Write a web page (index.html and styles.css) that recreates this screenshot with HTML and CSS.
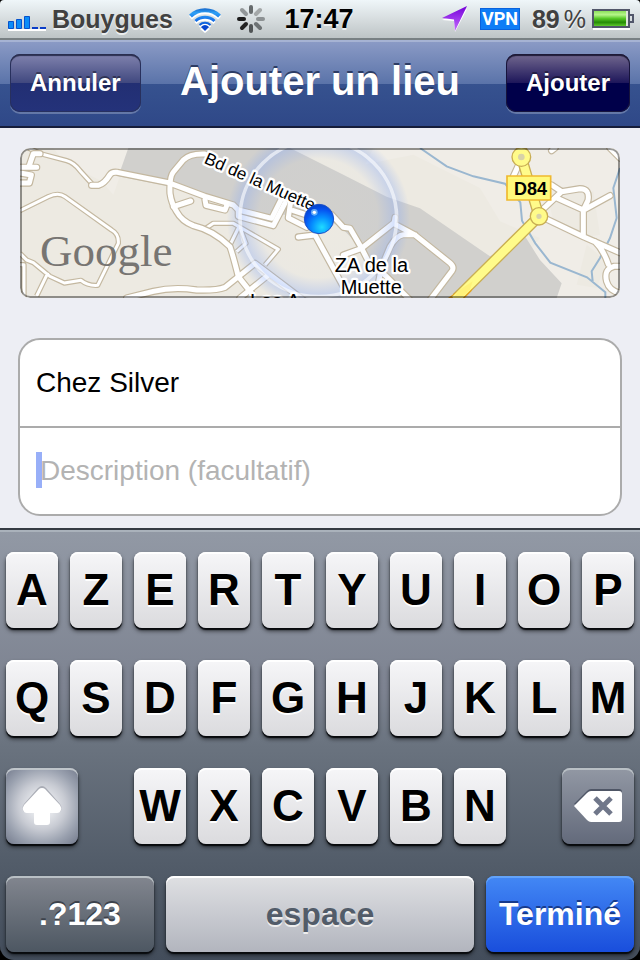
FILE: index.html
```html
<!DOCTYPE html>
<html lang="fr">
<head>
    <meta charset="UTF-8">
    <meta name="viewport" content="width=device-width, initial-scale=1.0">
    <title>Ajouter un lieu</title>
    <link rel="stylesheet" href="styles.css">
</head>
<body>
    <div class="screen">
        <div class="status-bar">
            <div class="status-left">
                <svg class="signal" width="38" height="15" viewBox="0 0 38 15">
                    <path d="M0 14h38" stroke="#fff" stroke-width="2"/>
                    <g fill="#0b8df8" stroke="#0652cc">
                        <path d="M.5 5.5h5v7h-5zM8.500 3.500h5v9h-5zM16.500 .5h5v12h-5z"/>
                    </g>
                    <path d="M24 12h6M32 12h6" stroke="#0b3ec8" stroke-width="2"/>
                </svg>
                <span class="carrier">Bouygues</span>
                <svg class="wifi" width="32" height="25" viewBox="0 0 32 25">
                    <defs>
                        <linearGradient id="wifiFill" x1="0" y1="0" x2="0" y2="24" gradientUnits="userSpaceOnUse">
                            <stop offset="0" stop-color="#1263c8"/>
                            <stop offset=".2" stop-color="#2fa0f5"/>
                            <stop offset=".5" stop-color="#1673ea"/>
                            <stop offset="1" stop-color="#003cc0"/>
                        </linearGradient>
                        <g id="waves">
                            <path d="M1.500 8a21 21 0 0 1 29 0" stroke-width="4"/>
                            <path d="M6.500 13a14 14 0 0 1 19 0" stroke-width="3"/>
                            <path d="M10.500 17a8 8 0 0 1 11 0" stroke-width="2"/>
                        </g>
                    </defs>
                    <use href="#waves" y="2" fill="none" stroke="#fff"/>
                    <path d="M11 21q5-4 10 0l-5 4z" fill="#fff"/>
                    <use href="#waves" fill="none" stroke="url(#wifiFill)"/>
                    <path d="M12 19q4-4 8 0l-4 4z" fill="#0646d0"/>
                </svg>
                <svg class="spinner" width="28" height="28" viewBox="-14 -14 28 28">
                    <g stroke-width="4" stroke-linecap="round">
                        <path d="M0-7v-5" stroke="#666b6d"/>
                        <path d="M5-5l4-4" stroke="#a4a8a9"/>
                        <path d="M7 0h5" stroke="#8c9193"/>
                        <path d="M5 5l4 4" stroke="#6d7274"/>
                        <path d="M0 7v5" stroke="#505456"/>
                        <path d="M-5 5l-4 4" stroke="#222"/>
                        <path d="M-7 0h-5" stroke="#1c1c1c"/>
                        <path d="M-5-5l-4-4" stroke="#929799"/>
                    </g>
                </svg>
            </div>
            <div class="clock">17:47</div>
            <div class="status-right">
                <svg class="location" width="26" height="26" viewBox="0 0 26 26">
                    <defs>
                        <linearGradient id="arrowFill" x1="0" y1="0" x2="0" y2="1">
                            <stop offset="0" stop-color="#7400d8"/>
                            <stop offset="1" stop-color="#c56cff"/>
                        </linearGradient>
                    </defs>
                    <path d="M25 3L0 14l12 1 1 11z" fill="#fff"/>
                    <path d="M25 0L0 12l12 1.500L13 25z" fill="url(#arrowFill)"/>
                </svg>
                <span class="vpn">VPN</span>
                <span class="percent">89<span class="sign">%</span></span>
                <svg class="battery" width="42" height="21" viewBox="0 0 42 21">
                    <defs>
                        <linearGradient id="batteryFill" x1="0" y1="0" x2="0" y2="1">
                            <stop offset="0" stop-color="#8be05a"/>
                            <stop offset=".25" stop-color="#b5f58a"/>
                            <stop offset=".5" stop-color="#57c827"/>
                            <stop offset=".75" stop-color="#258a05"/>
                            <stop offset="1" stop-color="#5fc92c"/>
                        </linearGradient>
                    </defs>
                    <path d="M1 20h37" stroke="#fff" stroke-width="2"/>
                    <path d="M1 1h36v17H1z" fill="#dfe6dc" stroke="#51566a" stroke-width="2"/>
                    <path d="M38 6h3v7h-3" fill="none" stroke="#51566a" stroke-width="2"/>
                    <path d="M2 2h32v15H2z" fill="url(#batteryFill)"/>
                </svg>
            </div>
        </div>

        <header class="nav-bar">
            <button class="nav-btn" type="button">Annuler</button>
            <h1>Ajouter un lieu</h1>
            <button class="nav-btn primary" type="button">Ajouter</button>
        </header>

        <main class="content">
            <div class="map">
                <!-- 3 unités = 1 pixel -->
                <svg viewBox="0 0 1800 450" preserveAspectRatio="xMidYMid slice" role="img" aria-label="Carte">
                    <defs>
                        <radialGradient id="dotFill" cx=".6" cy=".78" r=".75">
                            <stop offset="0" stop-color="#1fdcff"/>
                            <stop offset=".45" stop-color="#0690ff"/>
                            <stop offset=".8" stop-color="#0653f0"/>
                            <stop offset="1" stop-color="#0345d2"/>
                        </radialGradient>
                        <radialGradient id="halo">
                            <stop offset="0" stop-color="#86a8f5" stop-opacity="0"/>
                            <stop offset=".65" stop-color="#86a8f5" stop-opacity=".02"/>
                            <stop offset=".85" stop-color="#86a8f5" stop-opacity=".38"/>
                            <stop offset="1" stop-color="#86a8f5" stop-opacity="0"/>
                        </radialGradient>
                        <g id="roads" fill="none" stroke-linecap="round" stroke-linejoin="round">
                            <path d="M215 112h20q18-4 35-32 6-9 22-7l153 31 110 41 85 26 15 15 100 25 30-60"/>
                            <path d="M655 188v17l105 28 35-68M555 155l3 17 57 14 7-18M460 176l52-17"/>
                            <path d="M555 18q-45-2-65 18l-30 36q-12 14-10 64 4 30 20 55 15 28 50 42 60 14 110 63 10 30 25 90l40 50"/>
                            <path d="M0 58h50M0 105h28l6-24-34-6M28 52l12-35h20"/>
                            <path d="M812 160l-7 50 55 28M820 188l50 16M835 267l50-6 85 155"/>
                            <path d="M935 200l35 38 20 3 35 60 20 39 55 46 70 70"/>
                            <path d="M970 321l55-20 95-75 65 35 105 84q14 12 6 24l-66 87M1125 208l-3 20M1185 260h-35q-20 2-40 36l-25 60-10 50"/>
                            <path d="M320 450l80-20q60-14 130-4 60 2 85-8l90-72 145 110M660 450l85-69"/>
                        </g>
                        <g id="eastRoads" fill="none" stroke-linecap="round" stroke-linejoin="round">
                            <path d="M1560 204l130 62 110 48M1562 190l63-59-30-20M1480 85l24-52M1625 131l55-9q30 0 24 35l-14 29-80-36M1690 187l80-44M1690 187v76M1725 281q25 24 40 68M1800 355h-18q-32 8-22 46 8 28 40 34M1770 0l30 30M1595 8l10-8"/>
                        </g>
                        <g id="lanes" fill="none" stroke-linejoin="round">
                            <path d="M25 0l40 18 75 20q22 6 40 30l40 44M0 188l85-42q30-14 50 0l140 100q22 12 20 40l-62 126q-30 2-50-15l-50 8-43-20-50-41-20-8-20-20M84 374l-34 70M0 350h12v100"/>
                            <path d="M550 246l30-20h60l135 78-40 47M655 240l-25 51M662 244l16 42-28 25"/>
                        </g>
                    </defs>
                    <path d="M0 0h1800v450H0z" fill="#edeae2"/>
                    <path d="M100 0h230l-50 140-35-40L130 40zM1060 0h740v450h-250l-150-220-180-70-200-80z" fill="#f0ede7"/>
                    <path d="M980 60l200-40 200 100 60 100 120 50-100 130-80-60-200-160zM1580 130l140 0 20 130-60 10-80-50zM1700 290l60 50-30 80-60-10z" fill="#edeae2"/>
                    <path d="M325 0h485l160 80 130 66 100 35 210 144 105-60 45 71 65 70-15 44h-510l-55-110-20-39-65-66-80-35h-95l-30 15-115-34-185-65-160-31z" fill="#d1d0cd"/>
                    <path d="M1200 0l80 55 80 30 95 22 46 56 5 55 40 68 45 58 110 44 55 45v20M1800 60l-20 60 10 90-20 60-30 60-25 40 3 30" fill="none" stroke="#9ab7d0" stroke-width="6"/>
                    <use href="#lanes" stroke="#c4b8a0" stroke-width="16"/>
                    <use href="#lanes" stroke="#fff" stroke-width="9"/>
                    <use href="#roads" stroke="#c4b8a0" stroke-width="22"/>
                    <use href="#eastRoads" stroke="#c4b8a0" stroke-width="22"/>
                    <use href="#roads" stroke="#fff" stroke-width="15"/>
                    <use href="#eastRoads" stroke="#fff" stroke-width="15"/>
                    <g fill="none">
                        <path d="M1505 0v30l52 175L1310 450" stroke="#c9ae54" stroke-width="33"/>
                        <path d="M1362 408l-8 22-20 20h-50l25-18 25-4z" fill="#e3a020"/>
                        <path d="M1505 0v30l52 175L1305 455" stroke="#fffb8a" stroke-width="25"/>
                        <path d="M1358 400l-8 24-26 26h-24l18-24z" fill="#fff27a"/>
                    </g>
                    <g fill="#d8d2a8" stroke="#c9ae54" stroke-width="24">
                        <circle cx="1504" cy="27" r="18"/>
                        <circle cx="1557" cy="205" r="16"/>
                        <circle cx="1504" cy="27" r="18" stroke="#fffb8a" stroke-width="16"/>
                        <circle cx="1557" cy="205" r="16" stroke="#fffb8a" stroke-width="16"/>
                    </g>
                    <circle cx="895" cy="211" r="275" fill="url(#halo)"/>
                    <circle cx="895" cy="211" r="235" fill="none" stroke="#fff" stroke-opacity=".6" stroke-width="11"/>
                    <g class="map-label">
                        <text x="944" y="372">ZA de la</text>
                        <text x="962" y="438">Muette</text>
                        <text x="690" y="480">Les A</text>
                        <text class="street" transform="translate(550 44) rotate(24)">Bd de la Muette</text>
                    </g>
                    <path d="M1461 84h131v72h-131z" fill="#fff97c" stroke="#efb92f" stroke-width="5"/>
                    <text class="road-number" x="1482" y="140">D84</text>
                    <circle cx="897" cy="213" r="44" fill="url(#dotFill)" stroke="#1c50c8" stroke-width="3"/>
                    <circle cx="883" cy="193" r="10" fill="#9fe0ff" opacity=".6"/>
                    <circle cx="883" cy="193" r="5" fill="#fff"/>
                    <text class="map-logo" x="60" y="353">Google</text>
                </svg>
            </div>

            <form class="fields">
                <div class="field">
                    <input type="text" aria-label="Nom" value="Chez Silver">
                </div>
                <div class="field active">
                    <input type="text" aria-label="Description" placeholder="Description (facultatif)">
                </div>
            </form>
        </main>

        <div class="keyboard">
            <div class="key-row">
                <button class="key">A</button>
                <button class="key">Z</button>
                <button class="key">E</button>
                <button class="key">R</button>
                <button class="key">T</button>
                <button class="key">Y</button>
                <button class="key">U</button>
                <button class="key">I</button>
                <button class="key">O</button>
                <button class="key">P</button>
            </div>
            <div class="key-row">
                <button class="key">Q</button>
                <button class="key">S</button>
                <button class="key">D</button>
                <button class="key">F</button>
                <button class="key">G</button>
                <button class="key">H</button>
                <button class="key">J</button>
                <button class="key">K</button>
                <button class="key">L</button>
                <button class="key">M</button>
            </div>
            <div class="key-row with-shift">
                <button class="key shift" aria-label="Majuscule">
                    <svg width="40" height="40" viewBox="0 0 40 40">
                        <path d="M20 0q2 0 4 2l14 16q3 4 0 8H2q-3-4 0-8L16 2q2-2 4-2z" fill="#a9acb5"/>
                        <path d="M20 2q2 0 3 1l15 16q2 3 1 5-1 3-4 3h-7v9q0 3-3 3H15q-3 0-3-3v-9H5q-3 0-4-3-1-2 1-5L17 3q1-1 3-1z" fill="#fff"/>
                    </svg>
                </button>
                <div class="key-row">
                    <button class="key">W</button>
                    <button class="key">X</button>
                    <button class="key">C</button>
                    <button class="key">V</button>
                    <button class="key">B</button>
                    <button class="key">N</button>
                </div>
                <button class="key dark" aria-label="Effacer">
                    <svg width="48" height="34" viewBox="0 0 48 34">
                        <path d="M0 15L13 2q2-2 4-2h28q3 0 3 3v25" fill="#4f5666"/>
                        <path d="M0 17L13 4q2-2 4-2h28q3 0 3 3v25q0 3-3 3H17q-2 0-4-2z" fill="#fff"/>
                        <path d="M21 9l16 16M37 9L21 25" stroke="#70778a" stroke-width="5"/>
                    </svg>
                </button>
            </div>
            <div class="key-row bottom">
                <button class="key dark numbers">.?123</button>
                <button class="key space">espace</button>
                <button class="key done">Terminé</button>
            </div>
        </div>
    </div>
</body>
</html>
```

FILE: styles.css
```css
* {
    margin: 0;
    padding: 0;
    box-sizing: border-box;
}

body {
    font-family: "Liberation Sans", Arial, sans-serif;
    background: #000;
}

button,
input {
    font-family: inherit;
    border: none;
}

svg {
    display: block;
    flex: none;
}

.screen {
    min-height: 100vh;
    display: flex;
    flex-direction: column;
}

/* barre d'état */
.status-bar {
    display: grid;
    grid-template-columns: 1fr auto 1fr;
    align-items: center;
    height: 40px;
    padding: 0 6px 0 8px;
    background: linear-gradient(#eff6f9, #d7dddf 50%, #bdc4c6);
    border-bottom: 2px solid #788083;
    border-radius: 4px 4px 0 0;
    color: #414141;
    font-size: 25px;
    font-weight: bold;
    text-shadow: 0 2px 0 rgba(255, 255, 255, 0.7);
}

.status-left,
.status-right {
    display: flex;
    align-items: center;
}

.status-right {
    justify-content: flex-end;
}

.signal {
    margin: 8px 6px 0 0;
}

.wifi {
    margin: 2px 16px 0;
}

.clock {
    margin-right: 4px;
    color: #000;
    font-size: 27px;
}

.location {
    margin-right: 12px;
}

.vpn {
    width: 40px;
    height: 22px;
    margin-right: 12px;
    background: #0f7df6;
    border: 1px solid #0a62dc;
    color: #fff;
    font-family: Roboto, "Liberation Sans", sans-serif;
    font-size: 18px;
    line-height: 20px;
    text-align: center;
    text-shadow: none;
}

.percent {
    display: flex;
    gap: 4px;
    margin-right: 6px;
}

.percent .sign {
    font-weight: normal;
}

/* barre de navigation */
.nav-bar {
    display: grid;
    grid-template-columns: 1fr auto 1fr;
    align-items: center;
    height: 88px;
    padding: 0 10px 2px;
    background: linear-gradient(#8a9ac5, #5a73a9 50%, #36528f 50%, #2f4888);
    border-top: 2px solid #a6b3d3;
    border-bottom: 2px solid #161d3a;
}

.nav-bar h1 {
    padding-bottom: 4px;
    color: #fff;
    font-size: 40px;
    line-height: 48px;
    text-shadow: 0 -2px 0 #2c3c64;
}

.nav-btn {
    justify-self: start;
    height: 58px;
    padding: 0 20px;
    border-radius: 10px;
    background: linear-gradient(#8183ae, #40487f 50%, #222f73 50%, #24327a);
    box-shadow: inset 0 2px 1px #2b2f50, inset 0 0 0 1px #28315f, 0 2px 0 rgba(255, 255, 255, 0.25);
    color: #fff;
    font-size: 24px;
    font-weight: bold;
    text-shadow: 0 -2px 0 rgba(0, 0, 0, 0.4);
}

.nav-btn.primary {
    justify-self: end;
    background: linear-gradient(#73698f, #1d165a 50%, #00004a 50%, #00004a);
    box-shadow: inset 0 2px 1px #1f1b38, inset 0 0 0 1px #17153d, 0 2px 0 rgba(255, 255, 255, 0.25);
}

/* contenu */
.content {
    flex: 1;
    padding: 20px 18px 12px;
    background: #edeef4;
}

.map {
    position: relative;
    height: 150px;
    margin: 0 2px 40px;
    border-radius: 10px;
    overflow: hidden;
}

.map svg {
    width: 100%;
    height: 100%;
}

.map::after {
    content: "";
    position: absolute;
    inset: 0;
    border: 2px solid rgba(0, 0, 0, 0.4);
    border-radius: 10px;
}

.map-label {
    font-size: 60px;
    fill: #000;
    stroke: #fff;
    stroke-width: 14px;
    stroke-linejoin: round;
    paint-order: stroke;
}

.map-label .street {
    font-size: 51px;
}

.road-number {
    font-size: 54px;
    font-weight: bold;
}

.map-logo {
    font-family: "Liberation Serif", serif;
    font-size: 135px;
    fill: #777572;
}

.fields {
    background: #fff;
    border: 2px solid #ababab;
    border-radius: 22px;
    overflow: hidden;
}

.field {
    position: relative;
}

.field + .field {
    border-top: 2px solid #ababab;
}

.field input {
    display: block;
    width: 100%;
    height: 86px;
    padding: 0 16px;
    background: transparent;
    color: #000;
    font-size: 28px;
    outline: none;
}

.field.active input {
    padding-left: 20px;
}

.field input::placeholder {
    color: #b3b3b3;
    opacity: 1;
}

/* curseur de saisie */
.field.active::before {
    content: "";
    position: absolute;
    left: 16px;
    top: 24px;
    width: 6px;
    height: 36px;
    background: #98aff8;
}

/* clavier */
.keyboard {
    display: flex;
    flex-direction: column;
    gap: 32px;
    padding: 22px 6px 8px;
    background: linear-gradient(#9299a5, #7c8290 38%, #6a737f 50%, #525c69 78%, #434d5b);
    border-top: 2px solid #363b44;
    box-shadow: inset 0 2px 0 #aab2bb;
    border-radius: 0 0 14px 14px;
}

.key-row {
    display: flex;
    gap: 12px;
}

.key-row.with-shift {
    display: grid;
    grid-template-columns: 72fr 372fr 72fr;
    gap: 56px;
}

.key-row.bottom {
    display: grid;
    grid-template-columns: 148fr 308fr 148fr;
}

.key {
    display: flex;
    flex: 1 1 0;
    align-items: center;
    justify-content: center;
    min-width: 0;
    height: 76px;
    border-radius: 8px;
    background: linear-gradient(#f6f6f8, #dbdbde);
    box-shadow: inset 0 2px 0 #fff, 0 2px 1px #080a0d, 0 3px 4px rgba(0, 0, 0, 0.6);
    color: #000;
    font-size: 44px;
    font-weight: bold;
    text-shadow: 0 2px 0 #fff;
}

.key.shift {
    background: radial-gradient(circle, #e6e8ec 20%, #c8cbd3 45%, #9aa1af 72%, #737a8c);
    box-shadow: inset 0 2px 0 #bfc5ca, 0 2px 1px #080a0d, 0 3px 4px rgba(0, 0, 0, 0.6);
}

.key.dark {
    background: linear-gradient(#9298a4, #636a7b);
    box-shadow: inset 0 2px 0 #b9c0c5, 0 2px 1px #080a0d, 0 3px 4px rgba(0, 0, 0, 0.6);
}

.key.numbers {
    background: linear-gradient(#82868f, #4d5762);
    color: #fff;
    font-size: 32px;
    text-shadow: 0 -2px 0 #3c424b;
}

.key.space {
    background: linear-gradient(#dfe0e3, #b2b5be);
    color: #525c69;
    font-size: 32px;
    text-shadow: 0 2px 0 #eee;
}

.key.done {
    background: linear-gradient(#4388f5, #194edc);
    box-shadow: inset 0 2px 0 #63a3fa, 0 2px 1px #080a0d, 0 3px 4px rgba(0, 0, 0, 0.6);
    color: #fff;
    font-size: 32px;
    text-shadow: 0 -2px 0 #173a8c;
}
```
